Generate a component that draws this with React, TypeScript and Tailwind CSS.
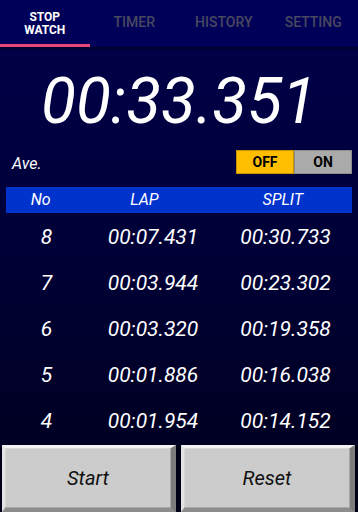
import React from "react";

const rows = [
  { no: 8, lap: "00:07.431", split: "00:30.733" },
  { no: 7, lap: "00:03.944", split: "00:23.302" },
  { no: 6, lap: "00:03.320", split: "00:19.358" },
  { no: 5, lap: "00:01.886", split: "00:16.038" },
  { no: 4, lap: "00:01.954", split: "00:14.152" },
];

function Bevel({ label }: { label: string }) {
  return (
    <div className="flex-1 h-full bg-[#cccccc] border-t-[3px] border-t-[#f2f2f2] border-l-[3px] border-l-[#e2e2e2] border-r-[5px] border-r-[#7c7c7c] border-b-[4px] border-b-[#8c8c8c] shadow-[inset_-1px_-1px_0_#a8a8a8,inset_1px_1px_0_#d8d8d8] flex items-center justify-center">
      <span className="italic text-[20px] text-[#111]">{label}</span>
    </div>
  );
}

export default function App() {
  return (
    <div
      className="w-[358px] h-[512px] flex flex-col overflow-hidden bg-gradient-to-b from-[#00004c] via-[#000036] to-[#00001c]"
      style={{ fontFamily: "Roboto, 'Noto Sans', sans-serif" }}
    >
      {/* Tabs */}
      <div className="h-[47px] bg-[#000058] grid grid-cols-4 shadow-[0_2px_2px_rgba(0,0,20,0.6)] relative z-10">
        <div className="flex flex-col items-center justify-center border-b-[3px] border-[#e8467c]">
          <span className="text-white font-bold text-[12px] leading-[13px] text-center pt-[3px]">
            STOP
            <br />
            WATCH
          </span>
        </div>
        <div className="flex items-center justify-center pb-[3px]">
          <span className="text-[#484860] font-medium text-[14px]">TIMER</span>
        </div>
        <div className="flex items-center justify-center pb-[3px]">
          <span className="text-[#484860] font-medium text-[14px]">HISTORY</span>
        </div>
        <div className="flex items-center justify-center pb-[3px]">
          <span className="text-[#484860] font-medium text-[14px]">SETTING</span>
        </div>
      </div>

      {/* Big time */}
      <div className="mt-[23px] h-[64px] flex justify-center">
        <span className="text-white italic font-normal text-[64px] leading-[64px]">
          00:33.351
        </span>
      </div>

      {/* Ave row */}
      <div className="mt-[16px] h-[24px] flex items-center justify-between pl-[12px] pr-[6px]">
        <span className="text-white italic text-[16px] mt-[3px]">Ave.</span>
        <div className="flex h-[24px]">
          <div className="w-[58px] bg-[#ffbf00] border border-[#c99000] flex items-center justify-center text-black font-bold text-[14px]">
            OFF
          </div>
          <div className="w-[58px] bg-[#aaaaaa] border border-[#8c8c8c] flex items-center justify-center text-black font-bold text-[14px]">
            ON
          </div>
        </div>
      </div>

      {/* Table header */}
      <div className="mt-[13px] mx-[6px] h-[26px] bg-[#0033cc] grid grid-cols-[1fr_2fr_2fr] items-center">
        <span className="text-white italic text-[16px] text-center">No</span>
        <span className="text-white italic text-[16px] text-center">LAP</span>
        <span className="text-white italic text-[16px] text-center">SPLIT</span>
      </div>

      {/* Rows */}
      <div className="pt-[2px] flex flex-col">
        {rows.map((r) => (
          <div
            key={r.no}
            className="h-[46px] grid grid-cols-[93px_120px_1fr] items-center text-white italic text-[21px]"
          >
            <span className="text-center">{r.no}</span>
            <span className="text-center">{r.lap}</span>
            <span className="text-center">{r.split}</span>
          </div>
        ))}
      </div>

      {/* Buttons */}
      <div className="flex-1 flex gap-[5px] pl-[2px] pr-[3px] bg-[#000018]">
        <Bevel label="Start" />
        <Bevel label="Reset" />
      </div>
    </div>
  );
}
